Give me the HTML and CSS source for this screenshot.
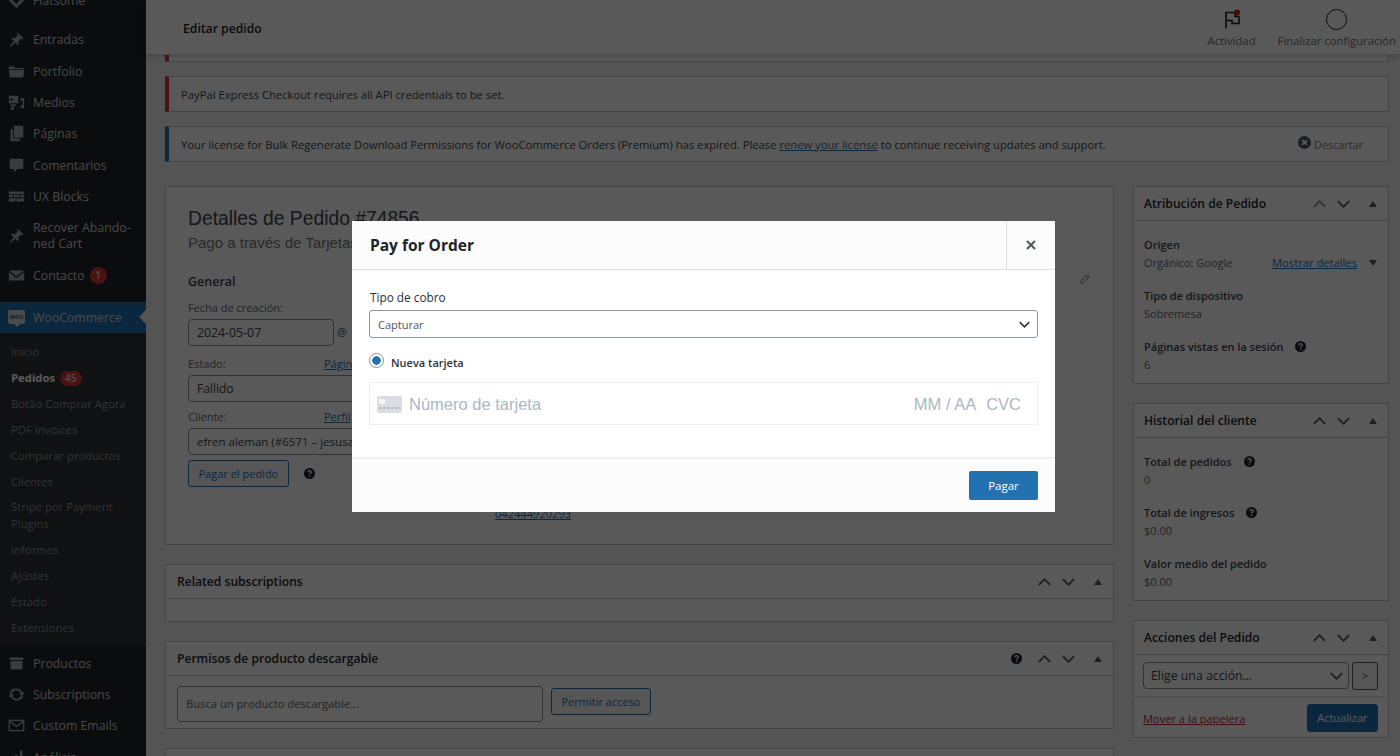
FILE: index.html
```html
<!DOCTYPE html>
<html lang="es">
<head>
    <meta charset="UTF-8">
    <meta name="viewport" content="width=device-width, initial-scale=1.0">
    <title>Editar pedido</title>
    <link rel="stylesheet" href="styles.css">
</head>
<body>

    <svg class="icon-defs" width="0" height="0">
        <symbol id="i-up" viewBox="0 0 14 8"><path d="M1 7l6-6 6 6" fill="none" stroke="currentColor" stroke-width="2"/></symbol>
        <symbol id="i-down" viewBox="0 0 14 8"><path d="M1 1l6 6 6-6" fill="none" stroke="currentColor" stroke-width="2"/></symbol>
        <symbol id="i-tri" viewBox="0 0 8 6"><path d="M4 0l4 6H0z" fill="currentColor"/></symbol>
        <symbol id="i-help" viewBox="0 0 12 12"><circle cx="6" cy="6" r="6" fill="currentColor"/><path d="M4.2 4.6c0-2.4 3.7-2.4 3.7-.2 0 1.4-1.9 1.3-1.9 2.8" fill="none" stroke="#fff" stroke-width="1.4"/><rect x="5.3" y="8.2" width="1.5" height="1.5" fill="#fff"/></symbol>
        <symbol id="i-diamond" viewBox="0 0 20 20"><path d="M10 1l9 9-9 9-9-9zM10 6l-4 4 4 4 4-4z" fill="currentColor" fill-rule="evenodd"/></symbol>
        <symbol id="i-pin" viewBox="0 0 20 20"><path d="M10.4 1.5l8 7-1.6 1.2-1.2-.6-3.4 3.2.6 3.4-1.2 1.2-3-3.2-6 5.2-.8-.8 5-6.2-3.2-3 1.4-1.2 3.2.8 3.2-3.6-.4-1.2z" fill="currentColor"/></symbol>
        <symbol id="i-folder" viewBox="0 0 20 20"><path d="M1 4h6l1 2h11v1H1zM1 8h18l-1 9H2z" fill="currentColor"/></symbol>
        <symbol id="i-media" viewBox="0 0 20 20"><path d="M1 2h11v9H1zM4 5a1.5 1.5 0 1 0 .1 0zM14 5h5v10a2 2 0 1 1-1.500-1.900V8h-2zM3 12h6v2H7v3a2 2 0 1 1-1.500-2V14H3z" fill="currentColor" fill-rule="evenodd"/></symbol>
        <symbol id="i-pages" viewBox="0 0 20 20"><path d="M7 1h11v14H7zM3 5h3v11h8v3H3z" fill="currentColor"/></symbol>
        <symbol id="i-comment" viewBox="0 0 20 20"><path d="M3 2h14a1 1 0 0 1 1 1v10a1 1 0 0 1-1 1h-6l-4 4v-4H3a1 1 0 0 1-1-1V3a1 1 0 0 1 1-1z" fill="currentColor"/></symbol>
        <symbol id="i-blocks" viewBox="0 0 20 20"><path d="M1 4h18v3H1zM1 8h5v3H1zM7 8h6v3H7zM14 8h5v3h-5zM1 12h8v4H1zM10 12h9v4h-9z" fill="currentColor"/></symbol>
        <symbol id="i-mail" viewBox="0 0 20 20"><path d="M1 4h18l-9 7zM1 6l9 7 9-7v10H1z" fill="currentColor"/></symbol>
        <symbol id="i-box" viewBox="0 0 20 20"><path d="M2 3h16v3H2zM3 7h14v10H3z" fill="currentColor"/></symbol>
        <symbol id="i-sync" viewBox="0 0 20 20"><path d="M10 3a7 7 0 0 1 6.500 4.400L19 7l-2 5-4-3 2-.4A5.500 5.500 0 0 0 5 8H2a8 8 0 0 1 8-5zM3 8l4 3-2 .4A5.500 5.500 0 0 0 15 12h3a8 8 0 0 1-14.500 .6L1 13z" fill="currentColor"/></symbol>
        <symbol id="i-mail-line" viewBox="0 0 20 20"><path d="M1.500 4h17v12h-17zM2 5l8 6 8-6" fill="none" stroke="currentColor" stroke-width="1.500"/></symbol>
        <symbol id="i-chart" viewBox="0 0 20 20"><path d="M3 12h3v6H3zM8.500 7h3v11h-3zM14 2h3v16h-3z" fill="currentColor"/></symbol>
    </svg>

    <aside class="sidebar">
        <ul class="menu">
            <li class="menu-item menu-first"><svg class="menu-icon"><use href="#i-diamond"/></svg>Flatsome</li>
            <li class="menu-item"><svg class="menu-icon"><use href="#i-pin"/></svg>Entradas</li>
            <li class="menu-item"><svg class="menu-icon"><use href="#i-folder"/></svg>Portfolio</li>
            <li class="menu-item"><svg class="menu-icon"><use href="#i-media"/></svg>Medios</li>
            <li class="menu-item"><svg class="menu-icon"><use href="#i-pages"/></svg>Páginas</li>
            <li class="menu-item"><svg class="menu-icon"><use href="#i-comment"/></svg>Comentarios</li>
            <li class="menu-item"><svg class="menu-icon"><use href="#i-blocks"/></svg>UX Blocks</li>
            <li class="menu-item menu-tall"><svg class="menu-icon"><use href="#i-pin"/></svg><span>Recover Abando-<br>ned Cart</span></li>
            <li class="menu-item"><svg class="menu-icon"><use href="#i-mail"/></svg>Contacto <span class="count">1</span></li>
            <li class="menu-item menu-current"><span class="woo-icon">woo</span>WooCommerce</li>
        </ul>
        <ul class="submenu">
            <li>Inicio</li>
            <li class="sub-current">Pedidos <span class="count">45</span></li>
            <li>Botão Comprar Agora</li>
            <li>PDF Invoices</li>
            <li>Comparar productos</li>
            <li>Clientes</li>
            <li>Stripe por Payment<br>Plugins</li>
            <li>Informes</li>
            <li>Ajustes</li>
            <li>Estado</li>
            <li>Extensiones</li>
        </ul>
        <ul class="menu menu-after">
            <li class="menu-item"><svg class="menu-icon"><use href="#i-box"/></svg>Productos</li>
            <li class="menu-item"><svg class="menu-icon"><use href="#i-sync"/></svg>Subscriptions</li>
            <li class="menu-item"><svg class="menu-icon"><use href="#i-mail-line"/></svg>Custom Emails</li>
            <li class="menu-item"><svg class="menu-icon"><use href="#i-chart"/></svg>Análisis</li>
        </ul>
    </aside>

    <div class="main">
        <header class="topbar">
            <h1>Editar pedido</h1>
            <div class="top-actions">
                <div class="top-action">
                    <svg class="flag" viewBox="0 0 20 20"><path d="M4 19V3h9v4h4v7h-7v-3H4" fill="none" stroke="currentColor" stroke-width="1.600"/><circle cx="15" cy="3" r="3" fill="#cc1818"/></svg>
                    <span>Actividad</span>
                </div>
                <div class="top-action">
                    <span class="ring"></span>
                    <span>Finalizar configuración</span>
                </div>
            </div>
        </header>

        <div class="content">
            <div class="notice notice-cut"></div>
            <div class="notice">PayPal Express Checkout requires all API credentials to be set.</div>
            <div class="notice notice-info">
                <span>Your license for Bulk Regenerate Download Permissions for WooCommerce Orders (Premium) has expired. Please <a href="#">renew your license</a> to continue receiving updates and support.</span>
                <span class="dismiss"><svg class="dismiss-icon" viewBox="0 0 12 12"><circle cx="6" cy="6" r="6" fill="currentColor"/><path d="M3.800 3.800l4.400 4.400M8.200 3.800L3.800 8.200" stroke="#fff" stroke-width="1.500"/></svg>Descartar</span>
            </div>

            <div class="columns">
                <div class="col-main">
                    <section class="box order-box">
                        <h2>Detalles de Pedido #74856</h2>
                        <p class="order-sub">Pago a través de Tarjetas</p>
                        <div class="order-grid">
                            <div class="order-col">
                                <h3>General</h3>
                                <label class="field-label">Fecha de creación:</label>
                                <div class="date-row"><div class="input date-input">2024-05-07</div><span class="at">@</span></div>
                                <label class="field-label">Estado: <a href="#">Página</a></label>
                                <div class="input">Fallido</div>
                                <label class="field-label">Cliente: <a href="#">Perfil</a></label>
                                <div class="input customer-input">efren aleman (#6571 – jesusaleman)</div>
                                <div class="pay-row"><span class="btn">Pagar el pedido</span><svg class="help"><use href="#i-help"/></svg></div>
                            </div>
                            <a class="phone" href="#">042444920293</a>
                            <svg class="pencil" viewBox="0 0 12 12"><path d="M8.500 1L11 3.500 4 10.500 1 11l.5-3zM7.500 3L9 4.500" fill="none" stroke="currentColor" stroke-width="1.200"/></svg>
                        </div>
                    </section>

                    <section class="box">
                        <div class="box-head">
                            <span class="box-title">Related subscriptions</span>
                            <div class="box-controls">
                                <svg class="ctl"><use href="#i-up"/></svg>
                                <svg class="ctl"><use href="#i-down"/></svg>
                                <svg class="ctl-tri"><use href="#i-tri"/></svg>
                            </div>
                        </div>
                        <div class="box-empty"></div>
                    </section>

                    <section class="box">
                        <div class="box-head">
                            <span class="box-title">Permisos de producto descargable</span>
                            <div class="box-controls">
                                <svg class="help head-help"><use href="#i-help"/></svg>
                                <svg class="ctl"><use href="#i-up"/></svg>
                                <svg class="ctl"><use href="#i-down"/></svg>
                                <svg class="ctl-tri"><use href="#i-tri"/></svg>
                            </div>
                        </div>
                        <div class="download-row">
                            <div class="input download-input">Busca un producto descargable…</div>
                            <span class="btn">Permitir acceso</span>
                        </div>
                    </section>

                    <section class="box"><div class="box-head"></div></section>
                </div>

                <div class="col-side">
                    <section class="box">
                        <div class="box-head">
                            <span class="box-title">Atribución de Pedido</span>
                            <div class="box-controls">
                                <svg class="ctl ctl-faded"><use href="#i-up"/></svg>
                                <svg class="ctl"><use href="#i-down"/></svg>
                                <svg class="ctl-tri"><use href="#i-tri"/></svg>
                            </div>
                        </div>
                        <div class="stats">
                            <div class="stat">
                                <strong>Origen</strong>
                                <div class="stat-line"><span>Orgánico: Google</span><a href="#">Mostrar detalles</a><svg class="ctl-tri tri-down"><use href="#i-tri"/></svg></div>
                            </div>
                            <div class="stat"><strong>Tipo de dispositivo</strong><span>Sobremesa</span></div>
                            <div class="stat"><strong>Páginas vistas en la sesión <svg class="help"><use href="#i-help"/></svg></strong><span>6</span></div>
                        </div>
                    </section>

                    <section class="box">
                        <div class="box-head">
                            <span class="box-title">Historial del cliente</span>
                            <div class="box-controls">
                                <svg class="ctl"><use href="#i-up"/></svg>
                                <svg class="ctl"><use href="#i-down"/></svg>
                                <svg class="ctl-tri"><use href="#i-tri"/></svg>
                            </div>
                        </div>
                        <div class="stats">
                            <div class="stat"><strong>Total de pedidos <svg class="help"><use href="#i-help"/></svg></strong><span>0</span></div>
                            <div class="stat"><strong>Total de ingresos <svg class="help"><use href="#i-help"/></svg></strong><span>$0.00</span></div>
                            <div class="stat"><strong>Valor medio del pedido</strong><span>$0.00</span></div>
                        </div>
                    </section>

                    <section class="box">
                        <div class="box-head">
                            <span class="box-title">Acciones del Pedido</span>
                            <div class="box-controls">
                                <svg class="ctl"><use href="#i-up"/></svg>
                                <svg class="ctl"><use href="#i-down"/></svg>
                                <svg class="ctl-tri"><use href="#i-tri"/></svg>
                            </div>
                        </div>
                        <div class="action-row">
                            <div class="input action-select">Elige una acción…<svg class="ctl select-arrow"><use href="#i-down"/></svg></div>
                            <span class="btn go-btn">&gt;</span>
                        </div>
                        <div class="action-foot">
                            <a class="trash" href="#">Mover a la papelera</a>
                            <span class="btn btn-primary">Actualizar</span>
                        </div>
                    </section>
                </div>
            </div>
        </div>
    </div>

    <div class="overlay"></div>

    <div class="modal">
        <div class="modal-head">
            <h2>Pay for Order</h2>
            <button type="button" class="modal-close">
                <svg viewBox="0 0 10 10"><path d="M1 1l8 8M9 1L1 9" stroke="currentColor" stroke-width="2"/></svg>
            </button>
        </div>
        <div class="modal-body">
            <label class="modal-label">Tipo de cobro</label>
            <div class="modal-select">Capturar<svg class="modal-arrow"><use href="#i-down"/></svg></div>
            <div class="radio-row"><span class="radio"></span><span class="radio-text">Nueva tarjeta</span></div>
            <div class="card-field">
                <svg class="card-icon" viewBox="0 0 25 17"><rect width="25" height="17" rx="2" fill="#d9dde4"/><rect x="2" y="3" width="6" height="5" fill="#f2f4f7"/><path d="M2 12h21" stroke="#aab7c4" stroke-width="1.500" stroke-dasharray="3 1"/></svg>
                <span class="card-number">Número de tarjeta</span>
                <span class="card-expiry">MM / AA</span>
                <span class="card-cvc">CVC</span>
            </div>
        </div>
        <div class="modal-foot">
            <button type="button" class="pay-btn">Pagar</button>
        </div>
    </div>

</body>
</html>
```

FILE: styles.css
```css
html, body {
    margin: 0;
    padding: 0;
    height: 756px;
    overflow: hidden;
}

body {
    display: flex;
    font-family: "Open Sans", "Noto Sans", sans-serif;
    font-size: 12px;
    color: #3c434a;
    background-color: #f0f0f1;
}

a {
    color: #2271b1;
}

ul {
    list-style: none;
    margin: 0;
    padding: 0;
}

.icon-defs {
    position: absolute;
}

/* Sidebar */
.sidebar {
    width: 146px;
    flex-shrink: 0;
    background-color: #1d2327;
    color: #cfcfd0;
    font-size: 12.300px;
    height: 756px;
    overflow: hidden;
}

.menu-item {
    display: flex;
    align-items: center;
    height: 31.4px;
    padding-left: 8px;
    position: relative;
}

.menu-first {
    margin-top: -15.700px;
    margin-bottom: 8.300px;
}

.menu-tall {
    height: 47px;
    line-height: 16px;
}

.menu-icon {
    width: 17px;
    height: 17px;
    margin-right: 8px;
    flex-shrink: 0;
    color: #a7aaad;
}

.count {
    display: inline-block;
    min-width: 7px;
    padding: 0 5px;
    margin-left: 5px;
    height: 17px;
    line-height: 17px;
    text-align: center;
    font-size: 10px;
    font-weight: 400;
    border-radius: 9px;
    background-color: #d63638;
    color: #fff;
}

.menu-current {
    height: 31px;
    margin-top: 11px;
    background-color: #2271b1;
    color: #d5d7d9;
}

.menu-current::after {
    content: "";
    position: absolute;
    right: 0;
    top: 8px;
    border: 7px solid transparent;
    border-right-color: #f0f0f1;
    border-left: 0;
}

.woo-icon {
    position: relative;
    width: 17px;
    height: 14px;
    margin-right: 8px;
    background-color: #d5d7d9;
    border-radius: 2px;
    color: #1d2327;
    font-size: 7px;
    line-height: 13px;
    text-align: center;
}

.woo-icon::after {
    content: "";
    position: absolute;
    left: 6px;
    bottom: -3px;
    border: 3px solid transparent;
    border-top-color: #d5d7d9;
    border-bottom: 0;
}

.submenu {
    background-color: #2c3338;
    padding: 6px 0 6px 11px;
    font-size: 11.300px;
    color: #8f9295;
    line-height: 17px;
}

.submenu li {
    padding: 4.450px 0;
}

.sub-current {
    font-weight: 700;
    color: #fff;
}

.submenu .count {
    height: 15px;
    line-height: 15px;
    margin-left: 2px;
}

.menu-after {
    padding-top: 1px;
}

/* Main */
.main {
    flex: 1;
    min-width: 0;
}

.topbar {
    position: relative;
    z-index: 1;
    height: 55px;
    box-sizing: border-box;
    display: flex;
    justify-content: space-between;
    background-color: #fff;
    border-bottom: 1px solid #dcdcde;
    box-shadow: 0 1px 6px rgba(0, 0, 0, 0.2);
    padding: 0 4px 0 37px;
}

.topbar h1 {
    margin: 0;
    font-size: 12.200px;
    font-weight: 600;
    line-height: 57px;
    color: #1e1e1e;
}

.top-actions {
    display: flex;
    gap: 22px;
}

.top-action {
    display: flex;
    flex-direction: column;
    align-items: center;
    padding-top: 9px;
    font-size: 11.300px;
    line-height: 15px;
    color: #757575;
}

.flag {
    width: 20px;
    height: 21px;
    margin-bottom: 3px;
    color: #1e1e1e;
}

.ring {
    box-sizing: border-box;
    width: 21px;
    height: 21px;
    margin-bottom: 3px;
    border: 1.500px solid #1e1e1e;
    border-radius: 50%;
}

.content {
    padding: 0 11px 0 19px;
}

.notice {
    display: flex;
    justify-content: space-between;
    align-items: center;
    box-sizing: border-box;
    height: 36px;
    margin-bottom: 14px;
    padding: 0 25px 0 12px;
    background-color: #fff;
    border: 1px solid #c3c4c7;
    border-left: 4px solid #d63638;
    font-size: 11.240px;
}

.notice-cut {
    height: 7px;
    border-top: 0;
}

.notice-info {
    border-left-color: #2271b1;
    margin-bottom: 24px;
}

.dismiss {
    display: flex;
    align-items: center;
    gap: 3px;
    font-size: 10.800px;
    color: #787c82;
}

.dismiss-icon {
    width: 13px;
    height: 13px;
    margin-top: -3px;
    color: #50575e;
}

.columns {
    display: grid;
    grid-template-columns: 949px 256px;
    gap: 19px;
}

.box {
    background-color: #fff;
    border: 1px solid #c3c4c7;
    box-sizing: border-box;
    margin-bottom: 19px;
}

.box-head {
    display: flex;
    justify-content: space-between;
    align-items: center;
    box-sizing: border-box;
    height: 34px;
    padding: 0 11px 0 10px;
    border-bottom: 1px solid #c3c4c7;
}

.col-main .box-head {
    padding-left: 11px;
}

.box-title {
    font-size: 12.100px;
    font-weight: 600;
    color: #1d2327;
}

.box-controls {
    display: flex;
    align-items: center;
}

.ctl {
    width: 13px;
    height: 8px;
    margin-left: 11px;
    color: #50575e;
}

.ctl-faded {
    color: #8c8f94;
}

.ctl-tri {
    width: 8px;
    height: 6px;
    margin-left: 19px;
    color: #50575e;
}

.tri-down {
    transform: rotate(180deg);
}

.help {
    width: 11px;
    height: 11px;
    vertical-align: -1px;
    margin-left: 9px;
    color: #1d2327;
}

.head-help {
    margin-right: 5px;
}

.box-empty {
    height: 22px;
}

/* Order box */
.order-box {
    height: 359px;
    padding: 21px 22px 0;
}

.order-box h2 {
    margin: 0;
    font-family: "Liberation Sans", sans-serif;
    font-size: 19.300px;
    font-weight: 400;
    line-height: 22px;
}

.order-sub {
    margin: 3px 0 0;
    font-family: "Liberation Sans", sans-serif;
    font-size: 15px;
    line-height: 20px;
    color: #777;
}

.order-grid {
    display: grid;
    grid-template-columns: 282px 1fr auto;
    gap: 25px;
    margin-top: 20px;
}

.order-col h3 {
    margin: 0 0 8px;
    font-size: 12.500px;
    font-weight: 600;
    line-height: 18px;
}

.field-label {
    display: flex;
    font-size: 11px;
    line-height: 18px;
    color: #646970;
}

.field-label a {
    margin-left: auto;
    width: 146px;
}

.input {
    box-sizing: border-box;
    height: 27px;
    margin: 2px 0 6px;
    padding: 0 8px;
    line-height: 26px;
    border: 1px solid #8c8f94;
    border-radius: 4px;
    background-color: #fff;
    font-size: 12px;
}

.customer-input {
    font-size: 11.500px;
}

.date-row {
    display: flex;
    gap: 3px;
    margin-bottom: 8px;
}

.date-input {
    width: 146px;
    margin-bottom: 0;
    font-size: 12.300px;
}

.at {
    line-height: 30px;
    font-size: 11px;
}

.pay-row {
    display: flex;
    align-items: center;
    margin-top: -1px;
}

.pay-row .help {
    margin-left: 15px;
}

.btn {
    display: inline-block;
    box-sizing: border-box;
    height: 27px;
    padding: 0 9.500px;
    line-height: 25px;
    font-size: 11px;
    color: #2271b1;
    background-color: #f6f7f7;
    border: 1px solid #2271b1;
    border-radius: 3px;
    white-space: nowrap;
}

.phone {
    align-self: end;
    font-size: 11.100px;
    line-height: 14px;
    margin-top: 234px;
}

.pencil {
    width: 10px;
    height: 10px;
    margin-top: 1px;
    margin-right: 1px;
    color: #787c82;
}

.download-row {
    display: flex;
    align-items: flex-start;
    gap: 8px;
    height: 52px;
    box-sizing: border-box;
    padding: 10px 11px 0;
}

.download-input {
    width: 366px;
    height: 36px;
    margin: 0;
    line-height: 34px;
    font-size: 11.200px;
    color: #646970;
}

.download-row .btn {
    margin-top: 2px;
}

/* Side boxes */
.stats {
    padding: 15px 10px 0;
    height: 162px;
    box-sizing: border-box;
    font-size: 11px;
    line-height: 18px;
    color: #646970;
}

.stat {
    display: flex;
    flex-direction: column;
    margin-bottom: 15px;
}

.stat strong {
    font-weight: 600;
    color: #3c434a;
}

.stat-line {
    display: flex;
    align-items: center;
    padding-right: 1px;
}

.stat-line a {
    margin-left: auto;
    margin-right: 12px;
    font-size: 11.200px;
}

.stat-line .tri-down {
    margin-left: 0;
}

.action-row {
    display: flex;
    gap: 3px;
    padding: 7px 10px 6px 9px;
    border-bottom: 1px solid #dcdcde;
}

.action-select {
    display: flex;
    justify-content: space-between;
    align-items: center;
    width: 206px;
    margin: 0;
    padding-left: 7px;
    font-size: 12.300px;
}

.select-arrow {
    margin-right: -3px;
}

.go-btn {
    width: 26px;
    height: 28px;
    padding: 0;
    text-align: center;
    color: #50575e;
    border-color: #50575e;
}

.action-foot {
    display: flex;
    justify-content: space-between;
    align-items: center;
    padding: 7px 10px 5px 9px;
}

.trash {
    font-size: 11.100px;
    color: #b32d2e;
}

.btn-primary {
    height: 28px;
    line-height: 26px;
    background-color: #2271b1;
    color: #fff;
}

/* Modal */
.overlay {
    position: fixed;
    inset: 0;
    z-index: 2;
    background-color: rgba(0, 0, 0, 0.65);
}

.modal {
    position: fixed;
    z-index: 3;
    left: 352px;
    top: 221px;
    width: 703px;
    height: 291px;
    display: flex;
    flex-direction: column;
    background-color: #fff;
    color: #2c3338;
}

.modal-head {
    display: flex;
    justify-content: space-between;
    box-sizing: border-box;
    height: 49px;
    flex-shrink: 0;
    background-color: #fcfcfc;
    border-bottom: 1px solid #dfdfdf;
}

.modal-head h2 {
    margin: 0;
    padding-left: 18px;
    font-size: 15.500px;
    font-weight: 700;
    line-height: 48px;
    color: #1d2327;
}

.modal-close {
    width: 49px;
    padding: 0;
    background: none;
    border: 0;
    border-left: 1px solid #dfdfdf;
    color: #50575e;
}

.modal-close svg {
    width: 10px;
    height: 10px;
}

.modal-body {
    flex: 1;
    padding: 19px 17px 0;
}

.modal-label {
    display: block;
    padding-left: 1px;
    font-size: 11.800px;
    font-weight: 500;
    line-height: 16px;
}

.modal-select {
    display: flex;
    justify-content: space-between;
    align-items: center;
    box-sizing: border-box;
    height: 28px;
    margin-top: 5px;
    padding: 0 7px 0 8px;
    border: 1px solid #8c9a9f;
    border-radius: 3px;
    font-size: 11px;
    color: #50575e;
}

.modal-arrow {
    width: 11px;
    height: 7px;
    color: #2c3338;
}

.radio-row {
    display: flex;
    align-items: flex-end;
    gap: 7px;
    height: 24px;
    margin-top: 10px;
}

.radio {
    box-sizing: border-box;
    width: 15px;
    height: 15px;
    margin-bottom: 4px;
    border: 1px solid #8c8f94;
    border-radius: 50%;
    background: radial-gradient(circle, #2271b1 0 4px, #fff 4.500px);
}

.radio-text {
    font-size: 11px;
    font-weight: 600;
    line-height: 17px;
    margin-bottom: 1px;
}

.card-field {
    display: flex;
    align-items: center;
    box-sizing: border-box;
    height: 43px;
    margin-top: 10px;
    padding: 1px 16px 0 7px;
    border: 1px solid #eceef0;
    font-family: "Liberation Sans", sans-serif;
    font-size: 16.500px;
    color: #aab7c4;
}

.card-icon {
    width: 25px;
    height: 17px;
    margin-right: 7px;
}

.card-number {
    flex: 1;
}

.card-expiry {
    margin-right: 10px;
}

.modal-foot {
    display: flex;
    justify-content: flex-end;
    align-items: center;
    box-sizing: border-box;
    height: 55px;
    padding-right: 17px;
    flex-shrink: 0;
    background-color: #fcfcfc;
    border-top: 2px solid #eeeeee;
}

.pay-btn {
    width: 69px;
    height: 29px;
    border: 0;
    border-radius: 2px;
    background-color: #2271b1;
    color: #fff;
    font-family: inherit;
    font-size: 11.500px;
}
```
